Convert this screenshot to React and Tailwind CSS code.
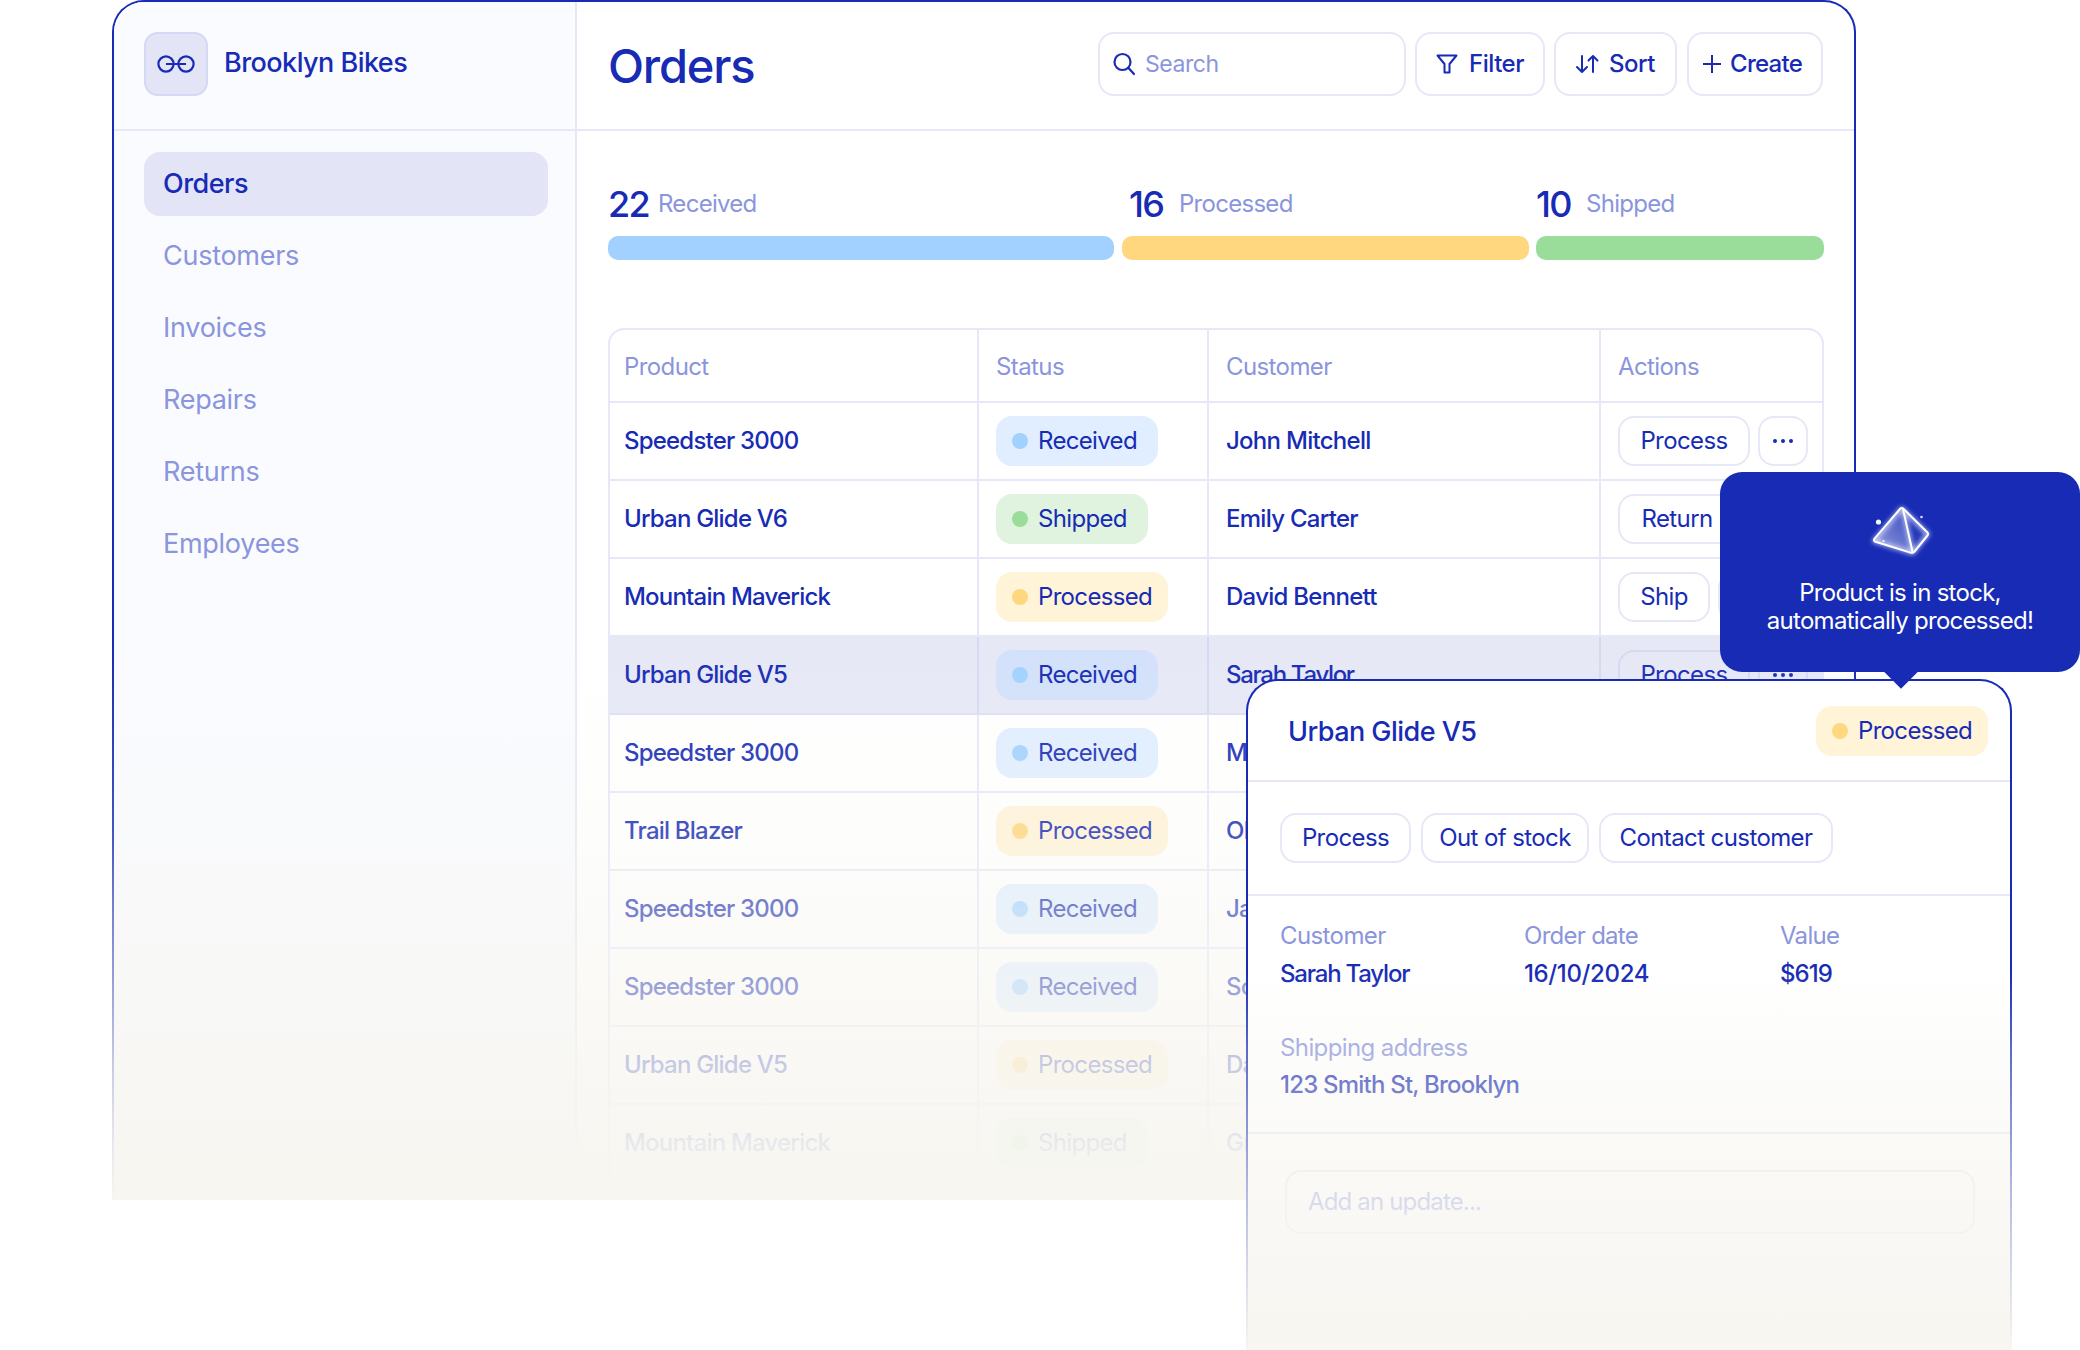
import React from "react";

const rows = [
  ["Speedster 3000", "Received", "John Mitchell", "Process", "w-[132px]"],
  ["Urban Glide V6", "Shipped", "Emily Carter", "Return", "w-[118px]"],
  ["Mountain Maverick", "Processed", "David Bennett", "Ship", "w-[92px]"],
  ["Urban Glide V5", "Received", "Sarah Taylor", "Process", "w-[132px]", true],
  ["Speedster 3000", "Received", "Michael Brown", "Process", "w-[132px]"],
  ["Trail Blazer", "Processed", "Olivia Reed", "Ship", "w-[92px]"],
  ["Speedster 3000", "Received", "James Wilson", "Process", "w-[132px]"],
  ["Speedster 3000", "Received", "Sophia Clark", "Process", "w-[132px]"],
  ["Urban Glide V5", "Processed", "Daniel Lee", "Ship", "w-[92px]"],
  ["Mountain Maverick", "Shipped", "Grace Hall", "Return", "w-[118px]"],
];

const nav = ["Customers", "Invoices", "Repairs", "Returns", "Employees"];

function Badge({ status, active }) {
  const bg =
    status === "Received"
      ? active
        ? "bg-[#d2e1fa]"
        : "bg-[#e0eeff]"
      : status === "Shipped"
        ? "bg-[#e0f3df]"
        : "bg-[#fff3d8]";
  const dot =
    status === "Received" ? "bg-[#a2d1ff]" : status === "Shipped" ? "bg-[#9adc9a]" : "bg-[#ffd77e]";
  const w = status === "Received" ? "w-[162px]" : status === "Shipped" ? "w-[152px]" : "w-[172px]";
  return (
    <span className={`inline-flex h-[50px] items-center gap-[10px] rounded-[16px] pl-[16px] text-[24px] tracking-[-0.028em] ${bg} ${w}`}>
      <span className={`h-[16px] w-[16px] rounded-full ${dot}`} />
      {status}
    </span>
  );
}

function Pill({ children, className = "" }) {
  return (
    <span className={`inline-flex h-[50px] items-center justify-center rounded-[16px] border-2 text-[24px] tracking-[-0.025em] ${className}`}>
      {children}
    </span>
  );
}

function Gem() {
  return (
    <svg width="80" height="70" viewBox="0 0 80 70" fill="none">
      <defs>
        <linearGradient id="gemFill" x1="14" y1="50" x2="45" y2="15" gradientUnits="userSpaceOnUse">
          <stop offset="0" stopColor="#ffffff" stopOpacity="0.5" />
          <stop offset="1" stopColor="#ffffff" stopOpacity="0.16" />
        </linearGradient>
        <filter id="gemGlow" x="-30%" y="-30%" width="160%" height="160%">
          <feGaussianBlur stdDeviation="2.4" />
        </filter>
      </defs>
      <path d="M41.7 13.5 L14 46 L52.7 58 Z" fill="url(#gemFill)" />
      <path d="M41.7 13.5 L68 39 L52.7 58 Z" fill="#ffffff" fillOpacity="0.06" />
      <g filter="url(#gemGlow)" stroke="#dfe4ff" strokeWidth="3.2" strokeLinejoin="round">
        <path d="M41.7 13.5 L14 46 L52.7 58 L68 39 Z" />
        <path d="M43 14 L52.7 57.5" />
      </g>
      <g stroke="#ffffff" strokeWidth="2" strokeLinejoin="round" strokeLinecap="round">
        <path d="M40 14 Q41.7 12 43.6 14 L67.5 37.5 Q68.6 39 67.5 40.5 L54.5 56.5 Q52.7 58.4 50.5 57.6 L15.5 46.8 Q13 45.6 14.6 43.6 Z" />
        <path d="M43 14 L52.7 57.5" />
      </g>
      <circle cx="18.5" cy="27" r="2.6" fill="#ffffff" opacity="0.95" />
      <circle cx="61.5" cy="22" r="1.3" fill="#ffffff" opacity="0.85" />
      <circle cx="23.5" cy="46" r="1" fill="#ffffff" />
    </svg>
  );
}

function Stat({ n, label, className = "" }) {
  return (
    <div className={`flex items-center ${className}`}>
      <span className="w-[50px] text-[36px] font-medium tracking-[-0.05em]">{n}</span>
      <span className="text-[24px] tracking-[-0.03em] text-[#8a95dd]">{label}</span>
    </div>
  );
}

export default function App() {
  return (
    <div className="relative h-[1350px] w-[2080px] overflow-hidden bg-white font-['Inter',sans-serif] text-[#172bb5]">
      <div className="ml-[112px] flex h-[1200px] w-[1744px] overflow-hidden rounded-t-[32px] border-2 border-b-0 border-[#172bb5] bg-white">
        <aside className="w-[463px] shrink-0 border-r-2 border-[#e6e8f8] bg-[#fafbff]">
          <div className="flex h-[129px] items-start gap-[16px] border-b-2 border-[#e6e8f8] pl-[30px] pt-[30px]">
            <div className="flex h-[64px] w-[64px] items-center justify-center rounded-[14px] border-2 border-[#d3d8f3] bg-[#e3e4f5]">
              <svg width="38" height="18" viewBox="0 0 38 18" fill="none" stroke="#172bb5" strokeWidth="2.2">
                <circle cx="9" cy="9" r="7.6" />
                <circle cx="29" cy="9" r="7.6" />
                <path d="M9 9 H29" />
              </svg>
            </div>
            <span className="mt-[13px] text-[27px] font-medium leading-[36px] tracking-[-0.02em]">Brooklyn Bikes</span>
          </div>
          <nav className="flex flex-col gap-[8px] pl-[30px] pt-[21px]">
            <div className="flex h-[64px] w-[404px] items-center rounded-[16px] bg-[#e3e4f5] pl-[19px] text-[27px] font-medium tracking-[-0.02em]">
              Orders
            </div>
            {nav.map((n) => (
              <div key={n} className="flex h-[64px] w-[404px] items-center pl-[19px] text-[27px] tracking-[-0.01em] text-[#8a95dd]">
                {n}
              </div>
            ))}
          </nav>
        </aside>

        <main className="min-w-0 flex-1">
          <header className="flex h-[129px] items-start border-b-2 border-[#e6e8f8] pl-[31px] pr-[29px] pt-[30px]">
            <h1 className="w-[490px] text-[47px] font-medium leading-[68px] tracking-[-0.025em]">Orders</h1>
            <div className="flex h-[64px] w-[308px] items-center gap-[8px] rounded-[16px] border-2 border-[#e6e8f8] pl-[11px] text-[23px] tracking-[-0.02em] text-[#8a95dd]">
              <svg width="26" height="26" viewBox="0 0 26 26" fill="none" stroke="#172bb5" strokeWidth="2.2" strokeLinecap="round">
                <circle cx="11.5" cy="11" r="8" />
                <path d="M17.5 17 L23 23" />
              </svg>
              <span className="pt-[1px]">Search</span>
            </div>
            <div className="ml-[9px] flex h-[64px] w-[130px] items-center gap-[11px] rounded-[16px] border-2 border-[#e6e8f8] pl-[19px] text-[24px] font-medium tracking-[-0.02em]">
              <svg width="22" height="20" viewBox="0 0 22 20" fill="none" stroke="#172bb5" strokeWidth="2" strokeLinejoin="round">
                <path d="M1.5 1.5 H20.5 L13.5 10 V18.5 H8.5 V10 Z" />
              </svg>
              Filter
            </div>
            <div className="ml-[9px] flex h-[64px] w-[123px] items-center gap-[10px] rounded-[16px] border-2 border-[#e6e8f8] pl-[19px] text-[24px] font-medium tracking-[-0.02em]">
              <svg width="24" height="20" viewBox="0 0 24 20" fill="none" stroke="#172bb5" strokeWidth="2" strokeLinecap="round" strokeLinejoin="round">
                <path d="M7 2 V18 M2 13 L7 18 L12 13" />
                <path d="M18 18 V2 M13.5 6.5 L18 2 L22.5 6.5" />
              </svg>
              Sort
            </div>
            <div className="ml-[10px] flex h-[64px] w-[136px] items-center gap-[8px] rounded-[16px] border-2 border-[#e6e8f8] pl-[13px] text-[24px] font-medium tracking-[-0.03em]">
              <svg width="20" height="20" viewBox="0 0 20 20" fill="none" stroke="#172bb5" strokeWidth="2">
                <path d="M1 10 H19 M10 1 V19" />
              </svg>
              Create
            </div>
          </header>

          <div className="pl-[31px] pr-[30px] pt-[53px]">
            <div className="flex h-[40px] items-center">
              <Stat n="22" label="Received" className="w-[521px]" />
              <Stat n="16" label="Processed" className="w-[407px]" />
              <Stat n="10" label="Shipped" />
            </div>
            <div className="mt-[12px] flex h-[24px] gap-[7px]">
              <div className="mr-[1px] w-[506px] rounded-[10px] bg-[#a2d1ff]" />
              <div className="w-[407px] rounded-[10px] bg-[#ffd77e]" />
              <div className="flex-1 rounded-[10px] bg-[#9adc9a]" />
            </div>

            <div className="mt-[68px] overflow-hidden rounded-t-[16px] border-2 border-[#e6e8f8]">
              <div className="grid h-[73px] grid-cols-[369px_230px_392px_1fr] border-b-2 border-[#e6e8f8] text-[24px] tracking-[-0.025em] text-[#8a95dd]">
                <div className="flex items-center border-r-2 border-[#e6e8f8] pl-[14px] pt-[2px]">Product</div>
                <div className="flex items-center border-r-2 border-[#e6e8f8] pl-[17px] pt-[2px]">Status</div>
                <div className="flex items-center border-r-2 border-[#e6e8f8] pl-[17px] pt-[2px]">Customer</div>
                <div className="flex items-center pl-[17px] pt-[2px]">Actions</div>
              </div>
              {rows.map((r, i) => {
                const line = r[5] ? "border-[#d6d9f0]" : "border-[#e6e8f8]";
                return (
                  <div
                    key={i}
                    className={`grid h-[78px] grid-cols-[369px_230px_392px_1fr] border-b-2 text-[24px] ${r[5] ? "border-[#dcdff2] bg-[#e6e8f6]" : "border-[#e6e8f8]"}`}
                  >
                    <div className={`flex items-center border-r-2 pl-[14px] font-medium tracking-[-0.033em] ${line}`}>{r[0]}</div>
                    <div className={`flex items-center border-r-2 pl-[17px] ${line}`}>
                      <Badge status={r[1]} active={r[5]} />
                    </div>
                    <div className={`flex items-center border-r-2 pl-[17px] font-medium ${r[2] === "Sarah Taylor" ? "tracking-[-0.055em]" : "tracking-[-0.03em]"} ${line}`}>{r[2]}</div>
                    <div className="flex items-center gap-[8px] pl-[17px]">
                      <Pill className={`${r[4]} ${line}`}>{r[3]}</Pill>
                      <span className={`inline-flex h-[50px] w-[50px] items-center justify-center rounded-[16px] border-2 ${line}`}>
                        <svg width="22" height="6" viewBox="0 0 22 6" fill="#172bb5">
                          <circle cx="3" cy="3" r="2" />
                          <circle cx="11" cy="3" r="2" />
                          <circle cx="19" cy="3" r="2" />
                        </svg>
                      </span>
                    </div>
                  </div>
                );
              })}
            </div>
          </div>
        </main>
      </div>

      {/* fade over the lower part of the window */}
      <div className="pointer-events-none absolute left-[112px] top-0 h-[1200px] w-[1744px] bg-[linear-gradient(to_bottom,rgba(247,246,241,0)_640px,rgba(247,246,241,0.2)_830px,rgba(247,246,241,0.42)_908px,rgba(247,246,241,0.58)_986px,rgba(247,246,241,0.78)_1064px,rgba(247,246,241,0.93)_1142px,rgba(247,246,241,1)_1200px)]" />

      {/* detail popover */}
      <div className="absolute left-[1246px] top-[679px] h-[671px] w-[766px] rounded-t-[32px] border-2 border-b-0 border-[#172bb5] bg-white">
        <div className="flex h-[101px] items-center justify-between border-b-2 border-[#e6e8f8] pl-[40px] pr-[22px] pt-[1px]">
          <span className="pt-[2px] text-[27px] font-medium tracking-[-0.02em]">Urban Glide V5</span>
          <Badge status="Processed" />
        </div>
        <div className="flex h-[114px] items-center gap-[10px] border-b-2 border-[#e6e8f8] pl-[32px]">
          <Pill className="w-[131px] border-[#e6e8f8]">Process</Pill>
          <Pill className="w-[168px] border-[#e6e8f8]">Out of stock</Pill>
          <Pill className="w-[234px] border-[#e6e8f8]">Contact customer</Pill>
        </div>
        <div className="h-[238px] border-b-2 border-[#e6e8f8] pl-[32px] pt-[22px] text-[24px]">
          <div className="grid grid-cols-[244px_256px_1fr]">
            <div>
              <div className="leading-[36px] tracking-[-0.025em] text-[#8a95dd]">Customer</div>
              <div className="mt-[2px] font-medium leading-[36px] tracking-[-0.05em]">Sarah Taylor</div>
            </div>
            <div>
              <div className="leading-[36px] tracking-[-0.03em] text-[#8a95dd]">Order date</div>
              <div className="mt-[2px] font-medium leading-[36px] tracking-[-0.015em]">16/10/2024</div>
            </div>
            <div>
              <div className="leading-[36px] tracking-[-0.03em] text-[#8a95dd]">Value</div>
              <div className="mt-[2px] font-medium leading-[36px] tracking-[-0.04em]">$619</div>
            </div>
          </div>
          <div className="mt-[38px] leading-[36px] tracking-[-0.025em] text-[#8a95dd]">Shipping address</div>
          <div className="mt-[1px] font-medium leading-[36px] tracking-[-0.033em]">123 Smith St, Brooklyn</div>
        </div>
        <div className="pl-[37px] pt-[36px]">
          <div className="flex h-[64px] w-[690px] items-center rounded-[16px] border-2 border-[#e6e8f8] pl-[21px] text-[24px] tracking-[-0.035em] text-[#8a95dd]">
            Add an update...
          </div>
        </div>
        <div className="pointer-events-none absolute -inset-x-[2px] -top-[2px] bottom-0 bg-[linear-gradient(to_bottom,rgba(247,246,241,0)_290px,rgba(247,246,241,0.3)_368px,rgba(247,246,241,0.5)_440px,rgba(247,246,241,0.72)_522px,rgba(247,246,241,1)_671px)]" />
      </div>

      {/* tooltip */}
      <div className="absolute left-[1720px] top-[472px] flex h-[200px] w-[360px] flex-col items-center rounded-[22px] bg-[#172bb5] pt-[23px] text-center text-[24px] leading-[28px] tracking-[-0.03em] text-white">
        <Gem />
        <p className="mt-[14px]">
          Product is in stock,
          <br />
          automatically processed!
        </p>
        <div className="absolute left-[181px] top-[178px] h-[32px] w-[32px] -translate-x-1/2 rotate-45 bg-[#172bb5]" />
      </div>
    </div>
  );
}
